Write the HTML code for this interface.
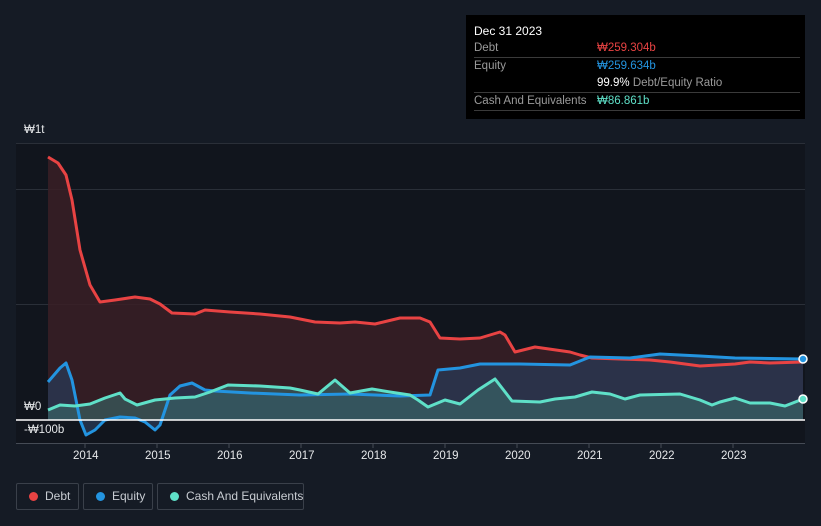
<!DOCTYPE html><html><head><style>
body{margin:0;background:#151b25;width:821px;height:526px;overflow:hidden;font-family:"Liberation Sans",sans-serif}
.tip{position:absolute;left:466px;top:15px;width:339px;height:104px;background:#000;color:#fff;font-size:11.5px}
.tip .r{position:absolute;left:8px;width:326px;border-bottom:1px solid #3a3a3a;height:17px;line-height:17px;color:#9a9a9a}
.leg{position:absolute;top:483px;height:27px;border:1px solid #3a404a;border-radius:2px;color:#c8ccd2;font-size:12px;line-height:25px;box-sizing:border-box;white-space:nowrap}
.leg i{position:absolute;left:12px;top:8px;width:9px;height:9px;border-radius:50%}
.ax{position:absolute;color:#e6e8ea;font-size:11.5px}
</style></head><body>
<svg width="821" height="526" style="position:absolute;left:0;top:0">
<rect x="16" y="143" width="789" height="300" fill="#11151d"/>
<g stroke="#2a2f38" stroke-width="1"><line x1="16" y1="143.5" x2="805" y2="143.5"/><line x1="16" y1="189.5" x2="805" y2="189.5"/><line x1="16" y1="304.5" x2="805" y2="304.5"/><line x1="16" y1="443.5" x2="805" y2="443.5" stroke="#454b55"/></g>
<g stroke="#454b55"><line x1="85" y1="443" x2="85" y2="448"/><line x1="157" y1="443" x2="157" y2="448"/><line x1="229" y1="443" x2="229" y2="448"/><line x1="301" y1="443" x2="301" y2="448"/><line x1="373" y1="443" x2="373" y2="448"/><line x1="445" y1="443" x2="445" y2="448"/><line x1="517" y1="443" x2="517" y2="448"/><line x1="589" y1="443" x2="589" y2="448"/><line x1="661" y1="443" x2="661" y2="448"/><line x1="733" y1="443" x2="733" y2="448"/></g>
<path d="M48,157 L58,163 L66,175 L72,200 L80,250 L90,285 L100,302 L115,300 L135,297 L150,299 L160,304 L172,313 L195,314 L205,310 L230,312 L260,314 L290,317 L315,322 L340,323 L355,322 L375,324 L400,318 L420,318 L430,322 L440,338 L460,339 L480,338 L500,332 L505,335 L515,352 L535,347 L570,352 L580,355 L592,358 L620,359 L650,360 L670,362 L700,366 L735,364 L750,362 L770,363 L803,362 L803,420 L48,420Z" fill="#3a1f26" fill-opacity=".85"/>
<path d="M48,382 L60,368 L66,363 L72,380 L80,420 L86,435 L95,430 L105,420 L120,417 L135,418 L145,422 L155,430 L160,425 L170,395 L180,386 L192,383 L205,390 L215,391 L250,393 L300,395 L350,394 L400,396 L430,395 L438,370 L460,368 L480,364 L520,364 L570,365 L590,357 L630,358 L660,354 L700,356 L735,358 L803,359 L803,420 L48,420Z" fill="#2a3a55" fill-opacity=".75"/>
<path d="M48,410 L60,405 L75,406 L90,404 L105,398 L120,393 L125,399 L137,405 L155,400 L175,398 L195,397 L210,392 L228,385 L260,386 L290,388 L300,390 L318,394 L335,380 L350,393 L372,389 L390,392 L410,395 L418,400 L428,407 L445,400 L460,404 L478,390 L495,379 L502,388 L512,401 L540,402 L555,399 L575,397 L592,392 L610,394 L625,399 L640,395 L680,394 L700,400 L712,405 L720,402 L735,398 L750,403 L770,403 L785,406 L803,399 L803,420 L48,420Z" fill="#3a6a6a" fill-opacity=".6"/>
<g fill="none" stroke-width="3" stroke-linejoin="round">
<path d="M48,157 L58,163 L66,175 L72,200 L80,250 L90,285 L100,302 L115,300 L135,297 L150,299 L160,304 L172,313 L195,314 L205,310 L230,312 L260,314 L290,317 L315,322 L340,323 L355,322 L375,324 L400,318 L420,318 L430,322 L440,338 L460,339 L480,338 L500,332 L505,335 L515,352 L535,347 L570,352 L580,355 L592,358 L620,359 L650,360 L670,362 L700,366 L735,364 L750,362 L770,363 L803,362" stroke="#e84343"/>
<path d="M48,382 L60,368 L66,363 L72,380 L80,420 L86,435 L95,430 L105,420 L120,417 L135,418 L145,422 L155,430 L160,425 L170,395 L180,386 L192,383 L205,390 L215,391 L250,393 L300,395 L350,394 L400,396 L430,395 L438,370 L460,368 L480,364 L520,364 L570,365 L590,357 L630,358 L660,354 L700,356 L735,358 L803,359" stroke="#2394e0"/>
<path d="M48,410 L60,405 L75,406 L90,404 L105,398 L120,393 L125,399 L137,405 L155,400 L175,398 L195,397 L210,392 L228,385 L260,386 L290,388 L300,390 L318,394 L335,380 L350,393 L372,389 L390,392 L410,395 L418,400 L428,407 L445,400 L460,404 L478,390 L495,379 L502,388 L512,401 L540,402 L555,399 L575,397 L592,392 L610,394 L625,399 L640,395 L680,394 L700,400 L712,405 L720,402 L735,398 L750,403 L770,403 L785,406 L803,399" stroke="#5fe0c8"/>
</g>
<line x1="16" y1="420" x2="805" y2="420" stroke="#fff" stroke-width="1.5"/>
<circle cx="803" cy="359" r="4" fill="#2394e0" stroke="#fff" stroke-width="1.5"/>
<circle cx="803" cy="399" r="4" fill="#5fe0c8" stroke="#fff" stroke-width="1.5"/>
</svg>
<div class="ax" style="left:24px;top:124px">₩1t</div>
<div class="ax" style="left:24px;top:401px">₩0</div>
<div class="ax" style="left:24px;top:424px">-₩100b</div>
<div class="ax" style="left:73px;top:450px">2014</div><div class="ax" style="left:145px;top:450px">2015</div><div class="ax" style="left:217px;top:450px">2016</div><div class="ax" style="left:289px;top:450px">2017</div><div class="ax" style="left:361px;top:450px">2018</div><div class="ax" style="left:433px;top:450px">2019</div><div class="ax" style="left:505px;top:450px">2020</div><div class="ax" style="left:577px;top:450px">2021</div><div class="ax" style="left:649px;top:450px">2022</div><div class="ax" style="left:721px;top:450px">2023</div>
<div class="tip">
<div style="position:absolute;left:8px;top:9px;font-size:12px">Dec 31 2023</div>
<div class="r" style="top:25px">Debt<span style="position:absolute;left:123px;color:#e84343">₩259.304b</span></div>
<div class="r" style="top:43px;border:none">Equity<span style="position:absolute;left:123px;color:#2394e0">₩259.634b</span></div>
<div class="r" style="top:60px"><span style="position:absolute;left:123px;color:#fff;white-space:nowrap">99.9% <span style="color:#9a9a9a">Debt/Equity Ratio</span></span></div>
<div class="r" style="top:78px">Cash And Equivalents<span style="position:absolute;left:123px;color:#5fe0c8">₩86.861b</span></div>
</div>
<div class="leg" style="left:16px;width:63px"><i style="background:#e84343"></i><span style="margin-left:28px">Debt</span></div>
<div class="leg" style="left:83px;width:70px"><i style="background:#2394e0"></i><span style="margin-left:28px">Equity</span></div>
<div class="leg" style="left:157px;width:147px"><i style="background:#5fe0c8"></i><span style="margin-left:28px">Cash And Equivalents</span></div>
</body></html>
